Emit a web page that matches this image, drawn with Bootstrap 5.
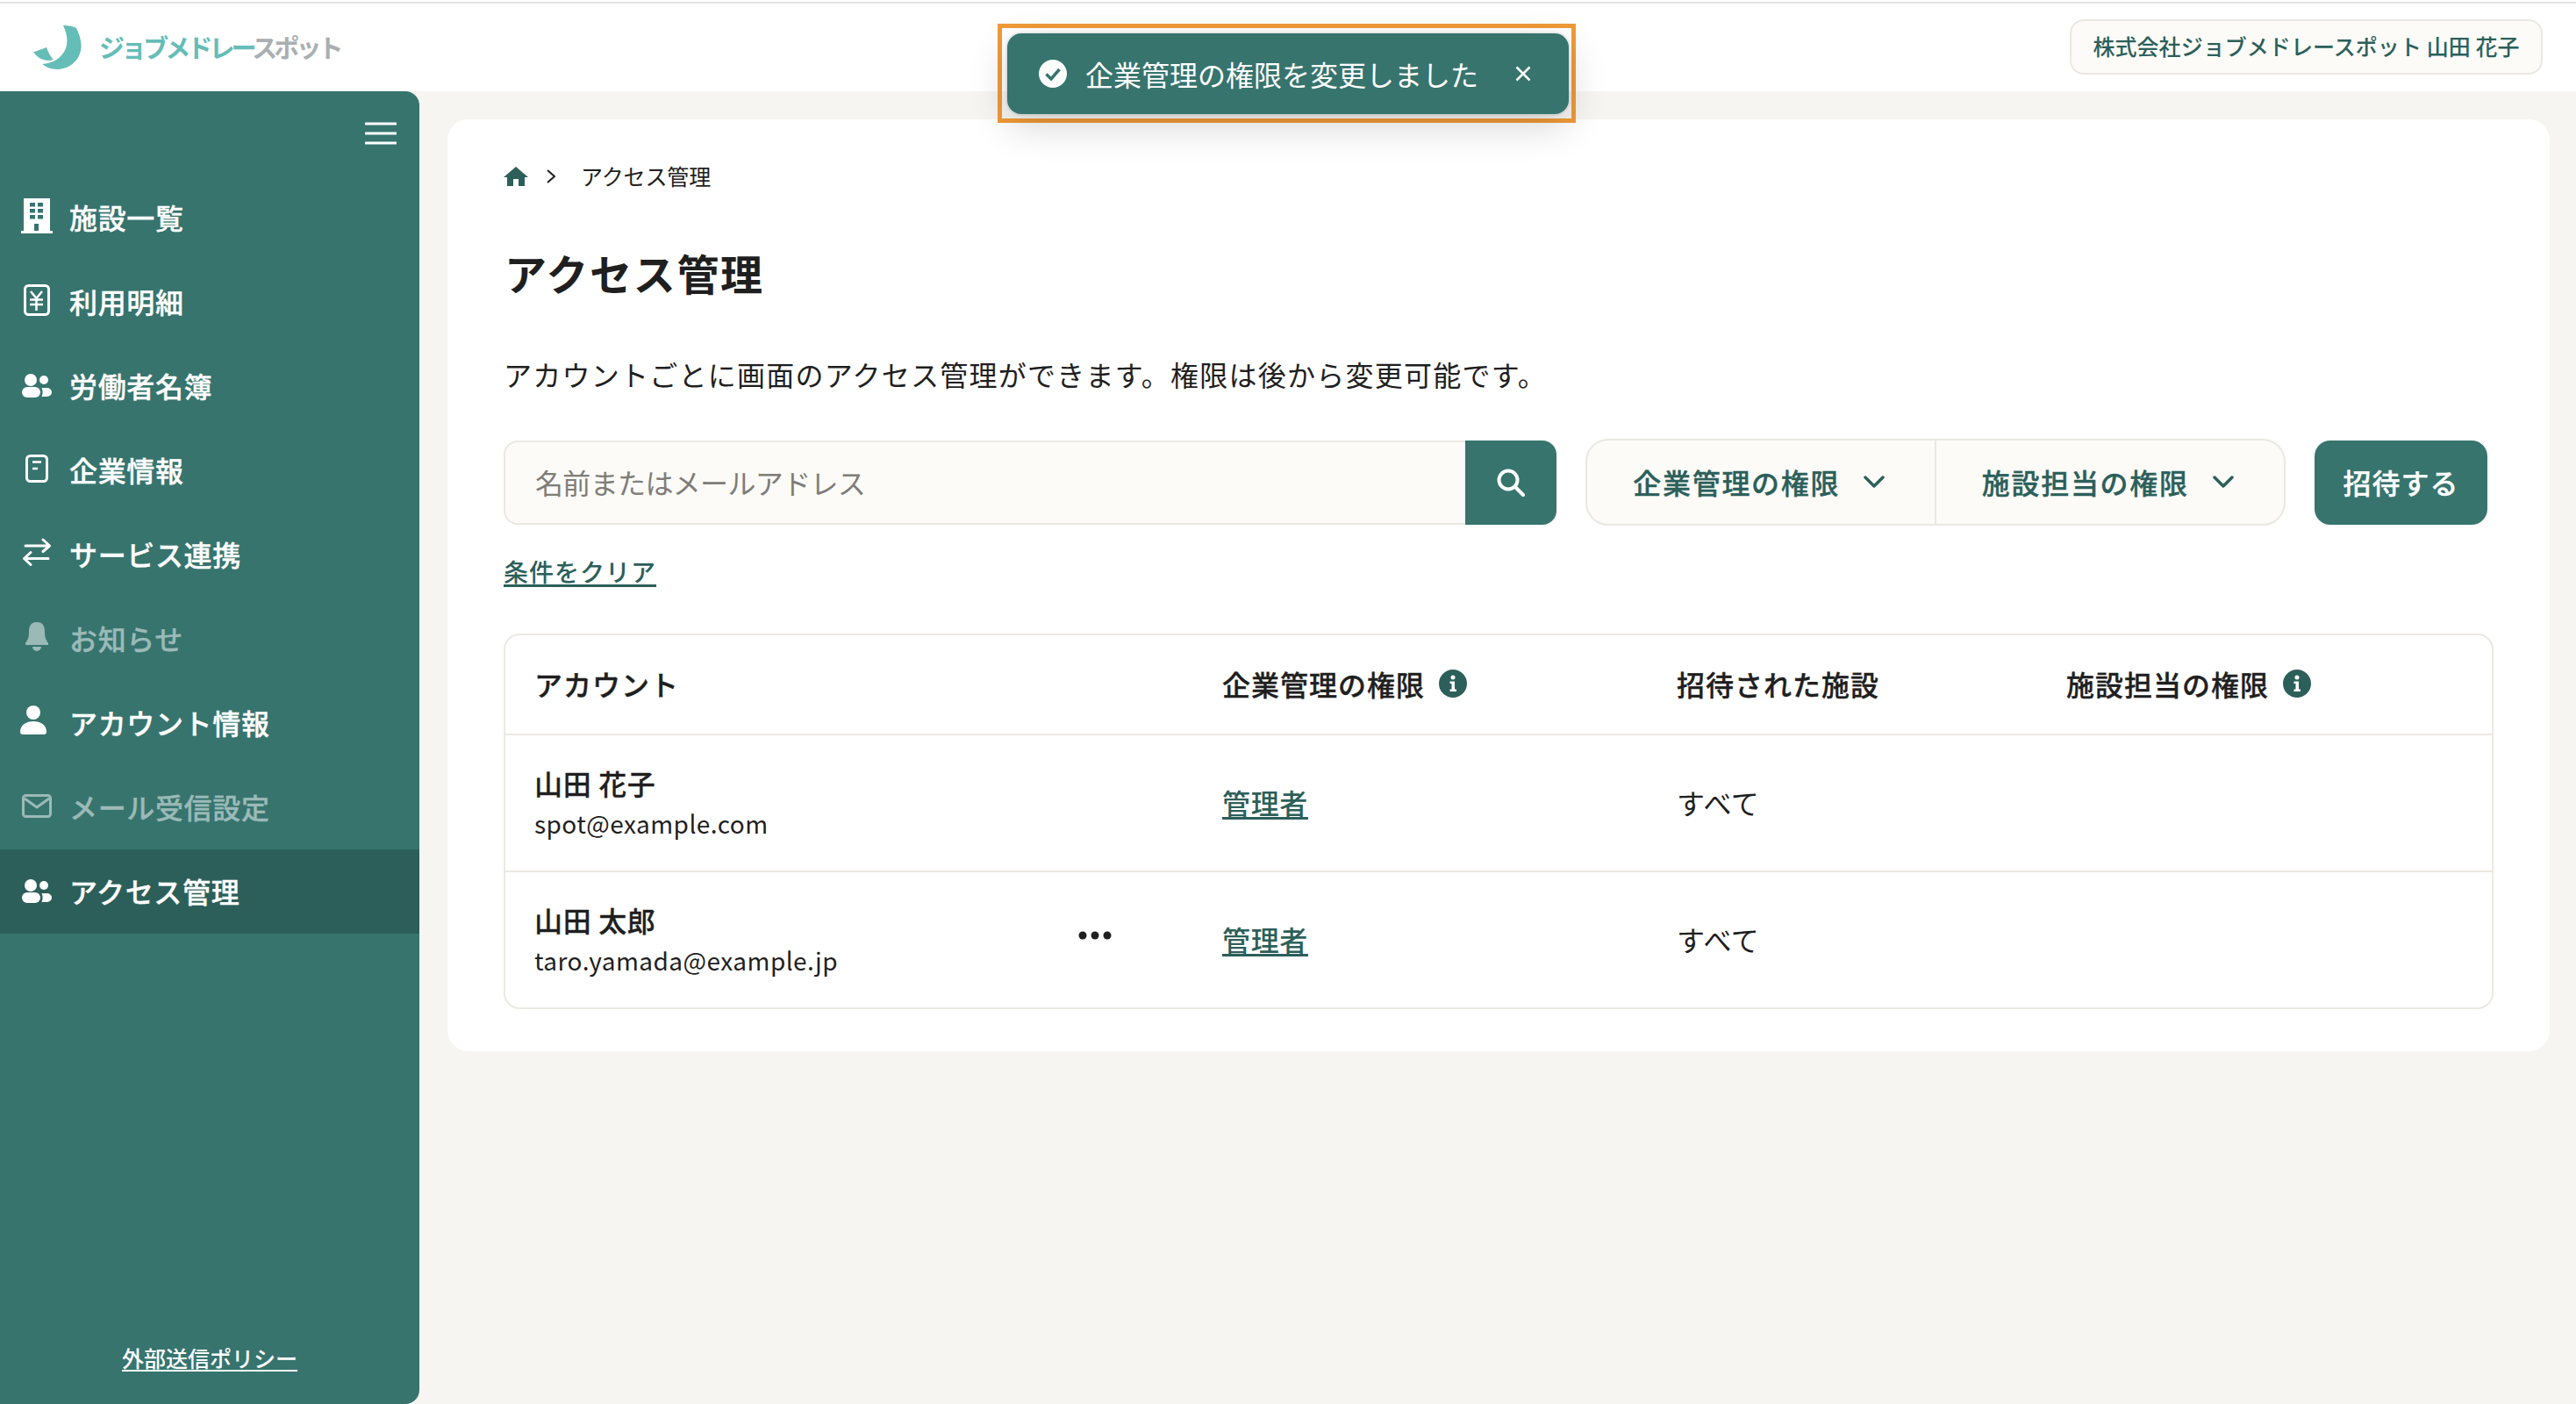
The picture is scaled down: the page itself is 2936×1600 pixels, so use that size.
<!DOCTYPE html>
<html lang="ja">
<head>
<meta charset="utf-8">
<title>アクセス管理</title>
<link href="https://cdn.jsdelivr.net/npm/bootstrap@5.3.0/dist/css/bootstrap.min.css" rel="stylesheet">
<style>
:root{--teal:#37746e;--teal-dark:#2c5f5a;--line:#ece9e4;--soft:#fcfbf8;--page:#f6f5f1;--ink:#1f1f1f;}
html,body{height:100%;}
body{background:var(--page);color:var(--ink);font-family:"Noto Sans CJK JP","Noto Sans",sans-serif;font-size:32px;letter-spacing:.65px;overflow:hidden;}
.app-shell{width:2936px;height:1600px;position:relative;}
.top-head{height:104px;background:#fff;padding:2px 38px 0 38px;position:relative;}
.top-head::before{content:"";position:absolute;left:0;right:0;top:2px;height:2px;background:#e3e3e3;}
.brand-box{gap:20px;font-size:29px;font-weight:700;letter-spacing:-3.9px;line-height:1;text-decoration:none;padding-top:1px;}
.brand-a{color:#65bdb7;}.brand-b{color:#a9afb3;}
.acct-pill{background:var(--soft);border:2px solid #eae8e2;border-radius:16px;height:63px;width:539px;color:var(--teal-dark);font-size:25px;font-weight:500;letter-spacing:.05px;}
.body-wrap{height:1496px;}
.side-bar{width:478px;background:var(--teal);border-radius:0 16px 16px 0;flex:none;}
.burger-box{height:96px;padding:35px 26px 0 0;}
.burger-btn{background:none;border:0;padding:0;line-height:0;}
.side-link{height:96px;padding:0 0 2px 18px;gap:13px;color:#fff;font-weight:500;display:flex;align-items:center;line-height:1;-webkit-text-stroke:.35px currentColor;}
.side-link:hover{color:#fff;}
.side-link.is-on{background:var(--teal-dark);}
.side-link.is-off{color:#9bbab7;}
.side-foot{padding-bottom:32px;}
.side-foot a{color:#fff;font-size:25px;letter-spacing:0;font-weight:500;line-height:36px;text-decoration-thickness:2px;text-underline-offset:3px;}
.main-pane{padding:32px 30px 0 32px;flex:1 1 auto;}
.white-sheet{background:#fff;border-radius:24px;padding:46px 64px 48px;height:1062px;}
.crumb-row{height:38px;font-size:25px;letter-spacing:-.1px;}
.crumb-row .ci{margin-right:21px;}
.crumb-text{margin-left:8px;}
.page-title{font-size:48px;font-weight:700;letter-spacing:1.7px;line-height:60px;margin:60px 0 0 1px;}
.page-desc{line-height:48px;margin:62px 0 0;letter-spacing:1.25px;}
.filter-row{margin-top:50px;height:99px;}
.search-group{width:1200px;height:96px;}
.search-group .form-control{background:var(--soft);border:2px solid #eae8e2;border-right:0;border-radius:16px 0 0 16px;font-size:32px;letter-spacing:-.65px;padding:0 34px 2px;color:var(--ink);box-shadow:none;}
.search-group .form-control::placeholder{color:#7f7d78;}
.search-group .btn{width:104px;background:var(--teal);border:0;border-radius:0 16px 16px 0;padding:0;}
.perm-group{width:798px;height:99px;margin-left:33px;background:var(--soft);border:2px solid #eae8e2;border-radius:26px;overflow:hidden;}
.perm-group .btn{flex:1 1 0;border:0;border-radius:0;background:transparent;color:var(--teal-dark);font-size:32px;font-weight:500;letter-spacing:1.7px;gap:27px;padding:0 5px 2px 0;-webkit-text-stroke:.35px currentColor;}
.perm-group .btn+.btn{border-left:2px solid #eae8e2;margin-left:0;}
.invite-btn{width:197px;height:96px;margin-left:33px;background:var(--teal);border:0;border-radius:18px;color:#fff;font-size:32px;font-weight:500;letter-spacing:1px;padding:0 0 2px;-webkit-text-stroke:.35px currentColor;}
.invite-btn:hover{background:var(--teal);color:#fff;}
.clear-row{margin-top:32px;line-height:40px;font-size:28px;letter-spacing:1px;}
.clear-link,.role-link{color:var(--teal-dark);font-weight:500;text-decoration-thickness:3px;text-underline-offset:3px;}
.table-frame{margin-top:51px;border:2px solid var(--line);border-radius:18px;overflow:hidden;height:428px;}
.table-frame .table{margin:0;table-layout:fixed;--bs-table-bg:transparent;--bs-border-color:var(--line);color:var(--ink);}
.table-frame th{height:113px;padding:0 0 2px;font-weight:500;vertical-align:middle;border-bottom-width:2px;letter-spacing:1px;-webkit-text-stroke:.35px currentColor;}
.table-frame td{height:156px;padding:0;vertical-align:middle;border-bottom-width:2px;}
.table-frame td.c2,.table-frame td.c3{padding-bottom:3px;}
.table-frame tr:last-child td{border-bottom:0;height:155px;}
.table-frame .c1{width:781px;padding-left:33px;}
.table-frame .c2{width:518px;padding-left:36px;}
.table-frame .c3{width:444px;padding-left:36px;}
.table-frame .c4{padding-left:36px;}
.th-line{gap:16px;}
.person-name{font-weight:500;line-height:44px;-webkit-text-stroke:.3px currentColor;}
.person-mail{font-size:28px;letter-spacing:.45px;line-height:44px;margin-top:2px;}
.person-cell{padding-right:90px;}
.dots-btn{background:none;border:0;padding:0;line-height:0;margin-top:-10px;}
.toast-ring{position:absolute;left:1137px;top:27px;width:659px;height:113px;border:5px solid #f19a38;z-index:5;padding:6px 3px 5px 6px;}
.toast-body{height:92px;width:640px;background:var(--teal);color:#fff;border-radius:16px;box-shadow:0 0 0 2px rgba(0,0,0,.05),0 14px 44px rgba(0,0,0,.16);padding:0 43px 0 36px;}
.toast-msg{font-size:32px;letter-spacing:0;font-weight:400;margin-left:21px;}
.toast-x{background:none;border:0;padding:0;line-height:0;margin-left:auto;}
</style>
</head>
<body>
<div class="app-shell">
  <header class="top-head d-flex align-items-center justify-content-between">
    <a class="brand-box d-flex align-items-center" href="#">
      <svg width="55" height="50" viewBox="38 29 55 50" aria-hidden="true"><path fill="#65bdb7" d="M72 29C78 29 84 30 87 32C91 40 93 48 92.5 54C91 70 78 79 65 79C58 79 52 76 48 73C60 72 70 67 75 55C78 46 76 38 72 29Z"/><path fill="#65bdb7" d="M38 59.5L53 54C55 60 58 65 61 68C52 71 44 67 38 59.5Z"/></svg>
      <span><span class="brand-a">ジョブメドレー</span><span class="brand-b">スポット</span></span>
    </a>
    <div class="acct-pill d-flex align-items-center justify-content-center">株式会社ジョブメドレースポット 山田 花子</div>
  </header>

  <div class="body-wrap d-flex">
    <aside class="side-bar d-flex flex-column">
      <div class="burger-box d-flex justify-content-end align-items-start">
        <button class="burger-btn" type="button" aria-label="menu"><svg width="36" height="26" viewBox="0 0 36 26"><path d="M1 2H35M1 13H35M1 24H35" stroke="#fff" stroke-width="3" stroke-linecap="round"/></svg></button>
      </div>
      <nav class="nav flex-column">
        <a class="side-link text-decoration-none" href="#"><svg width="48" height="48" viewBox="0 0 48 48"><path fill="#fff" fill-rule="evenodd" d="M9 3H39V40H42V43H6V40H9ZM16 8V12.5H22V8ZM25 8V12.5H31V8ZM16 15V19.5H22V15ZM25 15V19.5H31V15ZM16 22V26.500H22V22ZM25 22V26.500H31V22ZM21 32V40H26V32Z"/></svg>施設一覧</a>
        <a class="side-link text-decoration-none" href="#"><svg width="48" height="48" viewBox="0 0 48 48" fill="none" stroke="#fff"><rect x="10.500" y="6.500" width="27" height="33" rx="4" stroke-width="3"/><path d="M17 13L23.500 21L30 13M16 22.500H31M16 28H31M23.500 21V35" stroke-width="2.500"/></svg>利用明細</a>
        <a class="side-link text-decoration-none" href="#"><svg width="48" height="48" viewBox="0 0 48 48" fill="#fff"><circle cx="17" cy="18" r="7"/><circle cx="32" cy="18" r="5"/><rect x="7" y="26" width="21" height="12" rx="6"/><path d="M29.500 27H35.500A5.500 5 0 0 1 35.500 37H29.500C31 34 31 30 29.500 27Z"/></svg>労働者名簿</a>
        <a class="side-link text-decoration-none" href="#"><svg width="48" height="48" viewBox="0 0 48 48" fill="none" stroke="#fff"><rect x="12.500" y="8.500" width="23" height="29" rx="4" stroke-width="3"/><path d="M19 15.500H29M19 23H25" stroke-width="2.500"/></svg>企業情報</a>
        <a class="side-link text-decoration-none" href="#"><svg width="48" height="48" viewBox="0 0 48 48" fill="none" stroke="#fff" stroke-width="3" stroke-linecap="round" stroke-linejoin="round"><path d="M11 15H38M31 8L38.500 15L31 21.500M37 29.500H10M17 22.500L9.500 29.500L17 36.500"/></svg>サービス連携</a>
        <a class="side-link is-off text-decoration-none" href="#"><svg width="48" height="48" viewBox="0 0 48 48" fill="#9bbab7"><path d="M24 6C16 6 15 12 15 18C15 24 13 27 11 30V32H37V30C35 27 33 24 33 18C33 12 32 6 24 6Z"/><path d="M19 34H29A5 5 0 0 1 19 34Z"/></svg>お知らせ</a>
        <a class="side-link text-decoration-none" href="#"><svg width="48" height="48" viewBox="0 0 48 48" fill="#fff"><circle cx="20" cy="13" r="8"/><path d="M5 35C5 27 12 23 20 23C28 23 35 27 35 35C35 37 34 38 32 38H8C6 38 5 37 5 35Z"/></svg>アカウント情報</a>
        <a class="side-link is-off text-decoration-none" href="#"><svg width="48" height="48" viewBox="0 0 48 48" fill="none" stroke="#9bbab7" stroke-width="3"><rect x="8.500" y="11.500" width="31" height="24" rx="3"/><path d="M10 15L24 25L38 15"/></svg>メール受信設定</a>
        <a class="side-link is-on text-decoration-none" href="#"><svg width="48" height="48" viewBox="0 0 48 48" fill="#fff"><circle cx="17" cy="18" r="7"/><circle cx="32" cy="18" r="5"/><rect x="7" y="26" width="21" height="12" rx="6"/><path d="M29.500 27H35.500A5.500 5 0 0 1 35.500 37H29.500C31 34 31 30 29.500 27Z"/></svg>アクセス管理</a>
      </nav>
      <div class="side-foot mt-auto text-center"><a href="#">外部送信ポリシー</a></div>
    </aside>

    <main class="main-pane">
      <section class="white-sheet">
        <div class="crumb-row d-flex align-items-center">
          <svg class="ci" width="28" height="22" viewBox="0 0 28 22"><path fill="#2c5f5a" d="M14 0L28 12H24V22H17V14H11V22H4V12H0Z"/></svg>
          <svg class="ci" width="10" height="16" viewBox="0 0 10 16" fill="none" stroke="#1f1f1f" stroke-width="2"><path d="M1 1L9 8L1 15"/></svg>
          <span class="crumb-text">アクセス管理</span>
        </div>
        <h1 class="page-title">アクセス管理</h1>
        <p class="page-desc">アカウントごとに画面のアクセス管理ができます。権限は後から変更可能です。</p>

        <div class="filter-row d-flex align-items-center">
          <div class="input-group search-group flex-nowrap">
            <input class="form-control" type="text" placeholder="名前またはメールアドレス">
            <button class="btn d-flex align-items-center justify-content-center" type="button" aria-label="検索"><svg width="32" height="32" viewBox="0 0 32 32" fill="none" stroke="#fff" stroke-width="4" stroke-linecap="round"><circle cx="13" cy="13" r="10.500"/><path d="M21 21L30 30"/></svg></button>
          </div>
          <div class="btn-group perm-group">
            <button class="btn d-flex align-items-center justify-content-center" type="button">企業管理の権限<svg width="24" height="14" viewBox="0 0 24 14" fill="none" stroke="#2c5f5a" stroke-width="3.500" stroke-linecap="round" stroke-linejoin="round"><path d="M2 2L12 12L22 2"/></svg></button>
            <button class="btn d-flex align-items-center justify-content-center" type="button">施設担当の権限<svg width="24" height="14" viewBox="0 0 24 14" fill="none" stroke="#2c5f5a" stroke-width="3.500" stroke-linecap="round" stroke-linejoin="round"><path d="M2 2L12 12L22 2"/></svg></button>
          </div>
          <button class="btn invite-btn" type="button">招待する</button>
        </div>

        <div class="clear-row"><a class="clear-link" href="#">条件をクリア</a></div>

        <div class="table-frame">
          <table class="table">
            <thead>
              <tr>
                <th class="c1">アカウント</th>
                <th class="c2"><span class="th-line d-flex align-items-center">企業管理の権限<svg width="32" height="32" viewBox="0 0 32 32"><circle cx="16" cy="16" r="16" fill="#2c5f5a"/><circle cx="16" cy="9" r="2.500" fill="#fff"/><path d="M12.500 13.500H18V22.500H20V25H12.500V22.500H14.500V16H12.500Z" fill="#fff"/></svg></span></th>
                <th class="c3">招待された施設</th>
                <th class="c4"><span class="th-line d-flex align-items-center">施設担当の権限<svg width="32" height="32" viewBox="0 0 32 32"><circle cx="16" cy="16" r="16" fill="#2c5f5a"/><circle cx="16" cy="9" r="2.500" fill="#fff"/><path d="M12.500 13.500H18V22.500H20V25H12.500V22.500H14.500V16H12.500Z" fill="#fff"/></svg></span></th>
              </tr>
            </thead>
            <tbody>
              <tr>
                <td class="c1"><div class="person-name">山田 花子</div><div class="person-mail">spot@example.com</div></td>
                <td class="c2"><a class="role-link" href="#">管理者</a></td>
                <td class="c3">すべて</td>
                <td class="c4"></td>
              </tr>
              <tr>
                <td class="c1"><div class="person-cell d-flex align-items-center justify-content-between"><div><div class="person-name">山田 太郎</div><div class="person-mail">taro.yamada@example.jp</div></div><button class="dots-btn" type="button" aria-label="操作"><svg width="38" height="10" viewBox="0 0 38 10" fill="#1f1f1f"><circle cx="5" cy="5" r="4.500"/><circle cx="19" cy="5" r="4.500"/><circle cx="33" cy="5" r="4.500"/></svg></button></div></td>
                <td class="c2"><a class="role-link" href="#">管理者</a></td>
                <td class="c3">すべて</td>
                <td class="c4"></td>
              </tr>
            </tbody>
          </table>
        </div>
      </section>
    </main>
  </div>

  <div class="toast-ring">
    <div class="toast-body d-flex align-items-center">
      <svg width="32" height="32" viewBox="0 0 32 32"><circle cx="16" cy="16" r="16" fill="#fff"/><path d="M8.500 16.500L14 22L23.500 11" fill="none" stroke="#37746e" stroke-width="3.500"/></svg>
      <span class="toast-msg">企業管理の権限を変更しました</span>
      <button class="toast-x" type="button" aria-label="閉じる"><svg width="18" height="18" viewBox="0 0 18 18" fill="none" stroke="#fff" stroke-width="2.500"><path d="M1.500 1.500L16.500 16.500M16.500 1.500L1.500 16.500"/></svg></button>
    </div>
  </div>
</div>
<script src="https://cdn.jsdelivr.net/npm/bootstrap@5.3.0/dist/js/bootstrap.bundle.min.js"></script>
</body>
</html>
